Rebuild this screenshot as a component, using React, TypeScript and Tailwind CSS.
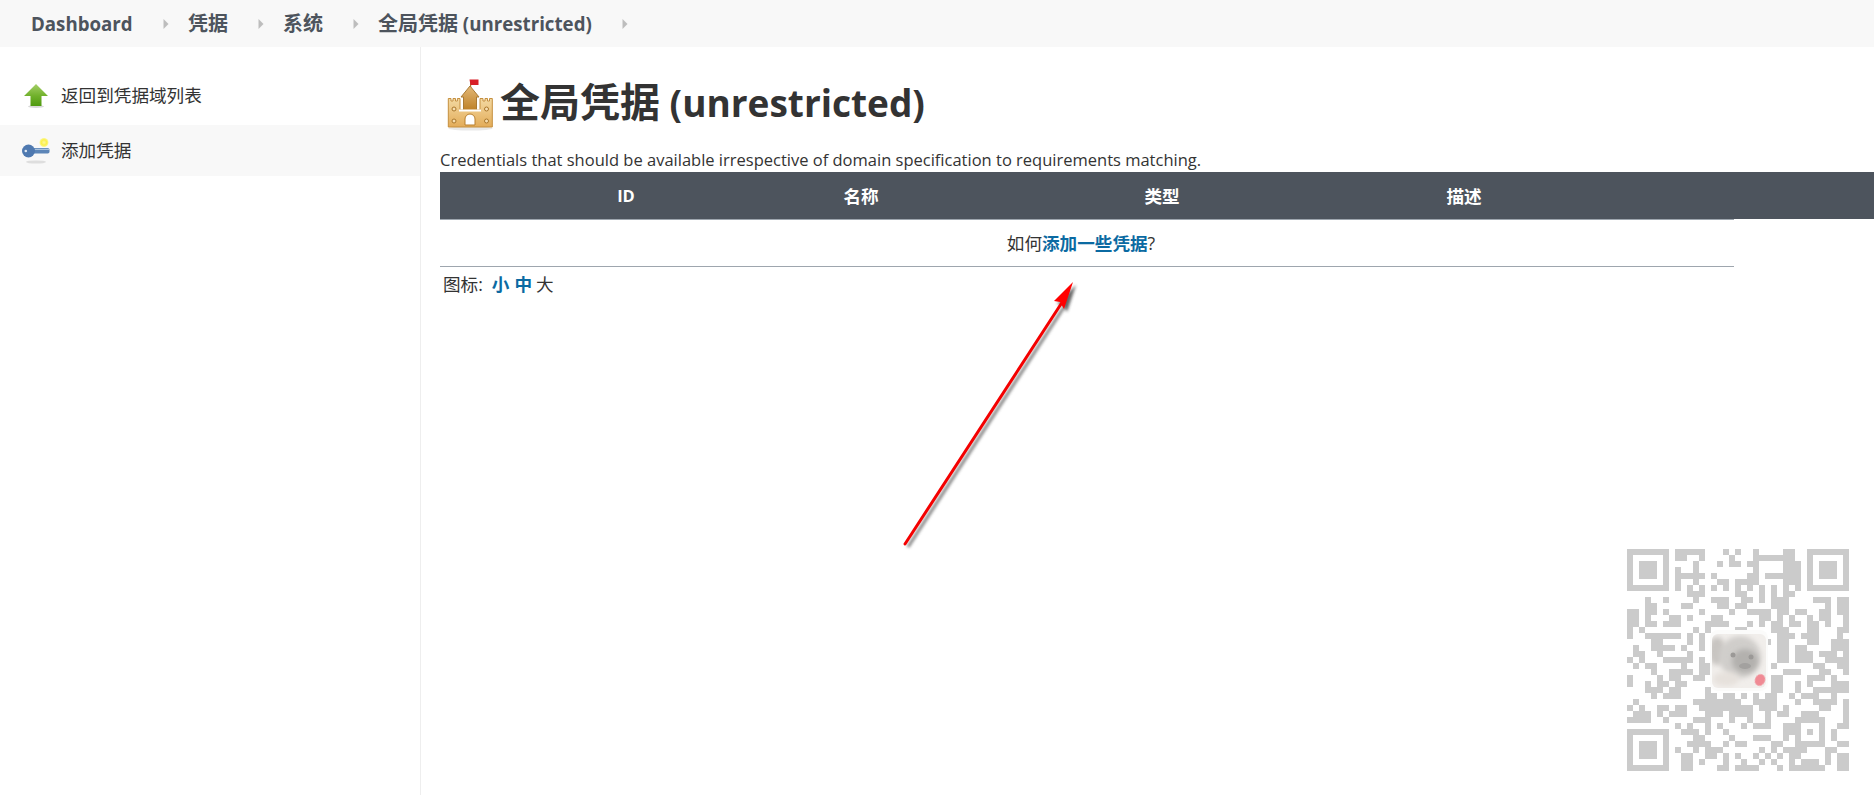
import React from "react";

const LEFT: string[] = [
  "111111101111100010",
  "100000101100100001",
  "101110100001000101",
  "101110101001000000",
  "101110101111101000",
  "100000101001000110",
  "111111101010101010",
  "000000000011100000",
  "000100100001001110",
  "000110000110000110",
  "110110100000100001",
  "110100011010001100",
  "110110111000011110",
  "101000000001010000",
  "100111111010100000",
  "000011000010100000",
  "010011110100100000",
  "011001000010000000",
  "101000111110100000",
  "010110000100110000",
  "000010011110110000",
  "100001011001100000",
  "100101101100000000",
  "000111011000010000",
  "000010111000011011",
  "010000000001111111",
  "101001101100111111",
  "011101011100011101",
  "111100100001110001",
  "000000001010010100",
  "111111100111010010",
  "100000100001100001",
  "101110100011110010",
  "101110101001011100",
  "101110100110011010",
  "100000100110100010",
  "111111100110000110",
];

const RIGHT: string[] = [
  "1001000011000111111",
  "0001111111000100000",
  "1011000011100101110",
  "0001000011100101110",
  "0011011111100101110",
  "1111000011100100000",
  "1010101010100111111",
  "1100101011000000000",
  "0110101110000111011",
  "1100001110000001011",
  "0011110110110011011",
  "0000110101001011001",
  "0010101101101101001",
  "1100001110001100011",
  "0000000111011100010",
  "0000010110001100111",
  "0000000110110000111",
  "0000000110111011101",
  "0000000110111001111",
  "0000001000000110011",
  "0000000011100011001",
  "0000001100001110100",
  "0000001100101000111",
  "0000001100100111111",
  "0101011001011100100",
  "1001111000100111101",
  "1110111010000011001",
  "1110010110011100001",
  "0010010000111110001",
  "0101110011100010011",
  "0000000011101010100",
  "0001110010100010100",
  "1100001100111110011",
  "0000101011110001100",
  "1001010101100001011",
  "0100101001011101011",
  "1111000101111110011",
];

function finderCell(x: number, y: number): boolean {
  if (x < 0 || y < 0 || x > 6 || y > 6) return false;
  if (x === 0 || y === 0 || x === 6 || y === 6) return true;
  if (x === 1 || y === 1 || x === 5 || y === 5) return false;
  return true;
}

function fixedCell(x: number, y: number): boolean | null {
  if (x >= 29 && y <= 7) return finderCell(x - 30, y);
  if (x <= 7 && y <= 7) return finderCell(x, y);
  if (x <= 7 && y >= 29) return finderCell(x, y - 30);
  if (x >= 28 && x <= 32 && y >= 28 && y <= 32) {
    return x === 28 || x === 32 || y === 28 || y === 32 || (x === 30 && y === 30);
  }
  return null;
}

function qrPath(): string {
  let d = "";
  for (let y = 0; y < 37; y++) {
    for (let x = 0; x < 37; x++) {
      const fixed = fixedCell(x, y);
      const data = x < 18 ? LEFT[y][x] === "1" : RIGHT[y][x - 18] === "1";
      if (fixed === null ? data : fixed) d += `M${x * 6} ${y * 6}h6v6h-6z`;
    }
  }
  return d;
}

function QrCode() {
  return (
    <svg className="absolute right-[25px] bottom-[24px]" width="222" height="222" viewBox="0 0 222 222">
      <defs>
        <filter id="pugblur" x="-30%" y="-30%" width="160%" height="160%">
          <feGaussianBlur stdDeviation="2.5" />
        </filter>
        <filter id="pugblur2" x="-30%" y="-30%" width="160%" height="160%">
          <feGaussianBlur stdDeviation="0.7" />
        </filter>
        <clipPath id="pugclip">
          <rect x="85" y="85" width="54" height="54" rx="6" />
        </clipPath>
      </defs>
      <path d={qrPath()} fill="#cbcbcb" shapeRendering="crispEdges" />
      <rect x="83" y="81" width="58" height="61" rx="8" fill="#fbfbfa" />
      <g clipPath="url(#pugclip)">
        <rect x="85" y="85" width="54" height="54" fill="#f1eeeb" />
        <ellipse cx="90" cy="102" rx="9" ry="14" fill="#c8c5c1" filter="url(#pugblur)" />
        <ellipse cx="113" cy="108" rx="21" ry="21" fill="#d0cecb" filter="url(#pugblur)" />
        <ellipse cx="118" cy="112" rx="13" ry="12" fill="#b3b1ae" filter="url(#pugblur)" />
        <circle cx="106" cy="106" r="2.5" fill="#9b9997" filter="url(#pugblur2)" />
        <circle cx="124" cy="108" r="2.5" fill="#9b9997" filter="url(#pugblur2)" />
        <ellipse cx="118" cy="117" rx="6" ry="3" fill="#a3a19f" filter="url(#pugblur2)" />
        <ellipse cx="99" cy="130" rx="13" ry="7" fill="#e6e1dc" filter="url(#pugblur)" />
      </g>
      <ellipse cx="133" cy="131" rx="5" ry="6" fill="#f08a94" transform="rotate(25 133 131)" filter="url(#pugblur2)" />
    </svg>
  );
}

function RedArrow() {
  return (
    <svg className="absolute left-[895px] top-[275px]" width="190" height="280" viewBox="895 275 190 280">
      <defs>
        <filter id="arrowshadow" x="-20%" y="-20%" width="140%" height="140%">
          <feGaussianBlur stdDeviation="1.6" />
        </filter>
      </defs>
      <g transform="translate(3 3)" filter="url(#arrowshadow)" opacity="0.75">
        <line x1="905" y1="544" x2="1061" y2="304" stroke="#555" strokeWidth="3" />
        <polygon points="1073,282 1054,301 1060,302 1064,309" fill="#333" />
      </g>
      <line x1="905" y1="544" x2="1061" y2="304" stroke="#f40000" strokeWidth="3" strokeLinecap="round" />
      <polygon points="1073,282 1054,301 1060,302 1064,309" fill="#ff0000" />
    </svg>
  );
}

function UpArrowIcon() {
  return (
    <svg width="24" height="24" viewBox="0 0 24 24">
      <defs>
        <linearGradient id="upg" x1="0" y1="0" x2="0" y2="1">
          <stop offset="0" stopColor="#a5cf68" />
          <stop offset="0.55" stopColor="#6fb02a" />
          <stop offset="1" stopColor="#4f9a10" />
        </linearGradient>
      </defs>
      <ellipse cx="12" cy="22.5" rx="8" ry="1.4" fill="#d8d8d8" />
      <polygon points="12,0 24,12 17.5,12 17.5,22 6.5,22 6.5,12 0,12" fill="url(#upg)" />
    </svg>
  );
}

function KeyIcon() {
  return (
    <svg width="28" height="26" viewBox="0 0 28 26">
      <defs>
        <radialGradient id="keyglow">
          <stop offset="0" stopColor="#fdf8a0" />
          <stop offset="0.6" stopColor="#fbf04a" />
          <stop offset="1" stopColor="#fbf79a" />
        </radialGradient>
      </defs>
      <ellipse cx="14" cy="24" rx="10" ry="1.6" fill="#dedede" />
      <circle cx="22" cy="4.5" r="4.5" fill="url(#keyglow)" />
      <rect x="8" y="10" width="19.5" height="5.5" rx="1.8" fill="#5d86b8" />
      <rect x="10" y="10.8" width="17" height="1.2" fill="#a9c2dd" />
      <circle cx="6.5" cy="13" r="6.5" fill="#4f79b0" />
      <circle cx="3.8" cy="13" r="1.3" fill="#dfe8f2" />
    </svg>
  );
}

function CastleIcon() {
  return (
    <svg width="48" height="52" viewBox="0 0 48 52" className="shrink-0">
      <defs>
        <linearGradient id="wall" x1="0" y1="0" x2="0" y2="1">
          <stop offset="0" stopColor="#f3d9a2" />
          <stop offset="1" stopColor="#e3ac59" />
        </linearGradient>
        <linearGradient id="tower" x1="0" y1="0" x2="0" y2="1">
          <stop offset="0" stopColor="#e3b877" />
          <stop offset="1" stopColor="#bd7f25" />
        </linearGradient>
      </defs>
      <ellipse cx="23.5" cy="49.5" rx="22" ry="2" fill="#e9e9e9" />
      <rect x="23" y="1" width="1.2" height="7" fill="#a8752c" />
      <path d="M22.5 0.5h9v5.5h-8z" fill="#d81f26" />
      <path d="M23 7L14 18h2.5v14h13V18H32z" fill="url(#tower)" stroke="#a97a35" strokeWidth="1" />
      <path d="M13 31V19.5h-2.6v2.5H8.5v-2.5H6v2.5H4v-2.5H1.3V48h44V19.5h-2.8v2.5h-2v-2.5H38v2.5h-2v-2.5h-3V31z" fill="url(#wall)" stroke="#c58f3e" strokeWidth="1" />
      <path d="M12 31.5h22" stroke="#fff" strokeWidth="2" />
      <path d="M18 46V40a5 5 0 0 1 10 0v6z" fill="#fff" stroke="#b97f2c" strokeWidth="1" />
      <circle cx="7" cy="30" r="2" fill="#f6deb0" stroke="#a9762b" />
      <circle cx="7" cy="42" r="2" fill="#f6deb0" stroke="#a9762b" />
      <circle cx="39.5" cy="30" r="2" fill="#f6deb0" stroke="#a9762b" />
      <circle cx="39.5" cy="42" r="2" fill="#f6deb0" stroke="#a9762b" />
    </svg>
  );
}

function Chevron() {
  return (
    <svg width="6" height="12" viewBox="0 0 6 12" className="shrink-0">
      <polygon points="0.5,1 5.5,6 0.5,11" fill="#bdbdbd" />
    </svg>
  );
}

function Crumb({ className, children }: { className: string; children: React.ReactNode }) {
  return (
    <div className={`flex items-center ${className}`}>
      <span className="whitespace-nowrap">{children}</span>
      <span className="ml-auto mr-[19px]">
        <Chevron />
      </span>
    </div>
  );
}

export default function App() {
  return (
    <div
      className="relative flex h-[795px] w-full flex-col overflow-hidden bg-white text-[17.6px] text-[#333333]"
      style={{ fontFamily: '"Open Sans", "Noto Sans CJK SC", sans-serif' }}
    >
      <header className="flex h-[47px] shrink-0 items-center bg-[#f8f8f8] pl-[31px] text-[20px] font-bold text-[#4d545d]">
        <Crumb className="w-[157px]">
          <span className="text-[18.7px]">Dashboard</span>
        </Crumb>
        <Crumb className="w-[95px]">凭据</Crumb>
        <Crumb className="w-[95px]">系统</Crumb>
        <Crumb className="w-[269px]">
          全局凭据<span className="text-[18.7px]"> (unrestricted)</span>
        </Crumb>
      </header>

      <div className="flex min-h-0 flex-1">
        <aside className="flex w-[421px] shrink-0 flex-col gap-[3px] border-r border-[#eeeeee] pt-[24px]">
          <div className="flex h-[51px] items-center pb-[2px] pl-[22px]">
            <span className="mr-[11px] flex w-[28px] justify-center">
              <UpArrowIcon />
            </span>
            <span>返回到凭据域列表</span>
          </div>
          <div className="flex h-[51px] items-center bg-[#f8f8f8] pl-[22px]">
            <span className="mr-[11px] flex w-[28px] justify-center">
              <KeyIcon />
            </span>
            <span>添加凭据</span>
          </div>
        </aside>

        <main className="min-w-0 flex-1 pl-[19px] pt-[32px]">
          <div className="flex h-[52px] items-center pl-[7px]">
            <CastleIcon />
            <h1 className="mb-[6px] ml-[5px] whitespace-nowrap text-[40px] font-bold leading-[46px] text-[#333333]">
              全局凭据<span className="text-[37px]"> (unrestricted)</span>
            </h1>
          </div>
          <p className="mt-[18px] h-[23px] whitespace-nowrap text-[16.5px] leading-[22px]">
            Credentials that should be available irrespective of domain specification to requirements matching.
          </p>
          <div className="grid h-[47px] grid-cols-[372px_98px_504px_100px_1fr] items-center bg-[#4d545d] pt-[2px] text-center font-bold text-white">
            <div className="text-[16.5px]">ID</div>
            <div>名称</div>
            <div>类型</div>
            <div>描述</div>
            <div />
          </div>
          <div className="flex h-[48px] w-[1294px] items-center justify-center border-y border-[#9ea6ae] pr-[12px]">
            <span>
              如何<a className="font-bold text-[#0b6aa2]">添加一些凭据</a>?
            </span>
          </div>
          <div className="flex h-[34px] items-center pl-[3px]">
            <span>图标:</span>
            <a className="ml-[9px] font-bold text-[#0b6aa2]">小</a>
            <a className="ml-[5px] font-bold text-[#0b6aa2]">中</a>
            <span className="ml-[4px]">大</span>
          </div>
        </main>
      </div>

      <RedArrow />
      <QrCode />
    </div>
  );
}
